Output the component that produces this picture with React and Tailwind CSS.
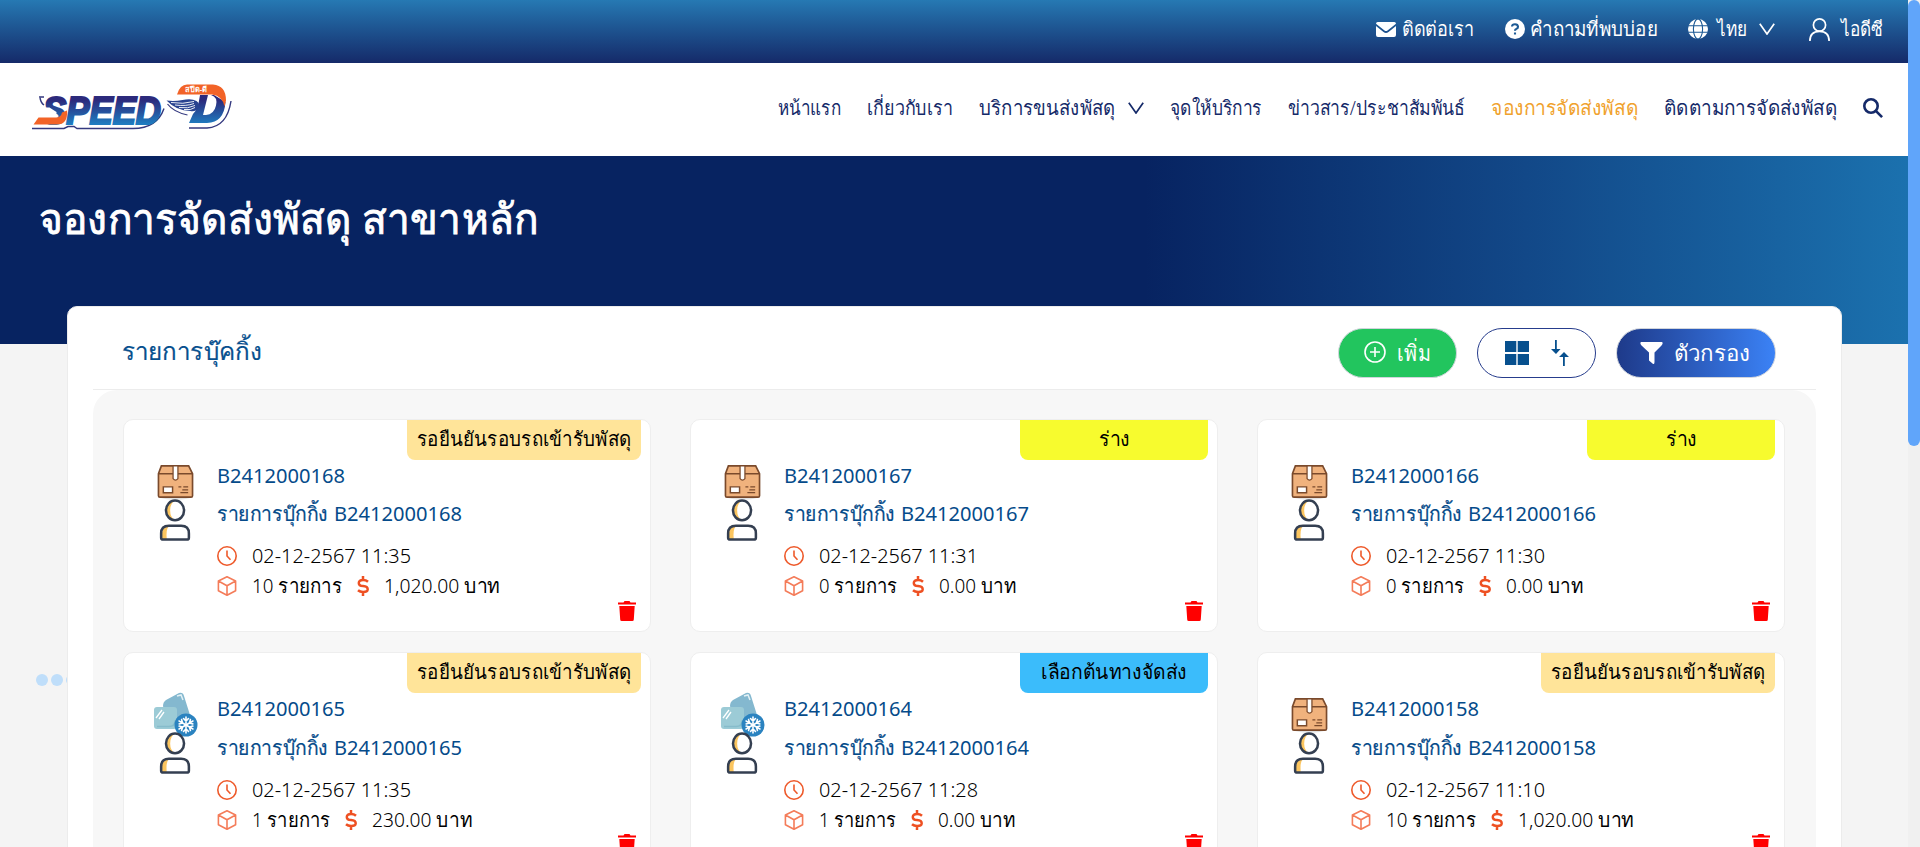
import React, { useLayoutEffect, useRef, useState } from "react";

/* Text set to a fixed measure, whichever Thai face the machine supplies. */
function Fit({ w, className = "", children }) {
  const ref = useRef(null);
  const [k, setK] = useState(1);
  useLayoutEffect(() => {
    if (ref.current && ref.current.offsetWidth) setK(w / ref.current.getBoundingClientRect().width);
  }, []);
  return (
    <span className={"block shrink-0 whitespace-nowrap " + className} style={{ width: w }}>
      <span ref={ref} className="inline-block origin-left" style={{ transform: `scaleX(${k})` }}>
        {children}
      </span>
    </span>
  );
}

const Chevron = () => (
  <svg className="h-3 w-4 shrink-0" viewBox="0 0 16 12" fill="none" stroke="currentColor" strokeWidth="1.7">
    <path d="M.8 .8 8 11 15.2 .8" />
  </svg>
);

function Logo() {
  return (
    <svg className="h-[54px] w-[206px]" viewBox="0 0 206 54">
      <defs>
        <linearGradient id="ink" x1="0" y1="14" x2="0" y2="44" gradientUnits="userSpaceOnUse">
          <stop offset="0.2" stopColor="#2c2a7c" />
          <stop offset="1" stopColor="#1f7cc0" />
        </linearGradient>
      </defs>
      <path
        d="M11 17h5M12 18q1 5 4 7M4 48.500h32l4-2h6l3 2h56q24 0 31-20M161 48h18q20-1 24-27"
        fill="none"
        stroke="#34397f"
        strokeWidth="1.400"
      />
      <text
        x="15"
        y="43.500"
        textLength="118"
        lengthAdjust="spacingAndGlyphs"
        fontFamily="Liberation Sans, sans-serif"
        fontWeight="700"
        fontStyle="italic"
        fontSize="38"
        fill="url(#ink)"
        stroke="url(#ink)"
        strokeWidth="2.200"
      >
        SPEED
      </text>
      <path d="M13 27.500h8.500l7 4.500v6H13z" fill="#fff" />
      <path d="M5.500 44.500 10.500 37.500H28q5 0 6-5l5-2q1 14-10 14z" fill="#f26327" />
      <path
        d="M172 15h8l-5 20h3q8-.500 10-9.500Q190 17 183 15h3l11.500 7Q196 42.500 179 43h-18l4-9q5-4 7-19z"
        fill="url(#ink)"
      />
      <path d="M149 14.500q3-10 10-10h26q13 1 13 16l-1.500 6q-2-10.500-12.500-12z" fill="#f26327" />
      <text x="157" y="11.500" fontFamily="Noto Sans, sans-serif" fontWeight="700" fontSize="7.500" fill="#fff" textLength="22">สปีด-ดี</text>
      <path d="M138.500 20.500q8 1 16-.500 9-2 14 1 4 3 2 7-3 4-8 3-14 0-24-10.500z" fill="#2a4390" />
      <path
        d="M143 22.500q12 2 23-1M147 25q11 1.500 19-1.500M151 27.500q9 1.500 16-2M156 29.500q7 1 11-2"
        fill="none"
        stroke="#fff"
        strokeWidth=".9"
      />
      <path d="M139.500 24q6 8 20 11" fill="none" stroke="#34397f" strokeWidth="1.200" />
    </svg>
  );
}

const Parcel = () => (
  <svg className="absolute left-[33px] top-[44px] h-[36px] w-[37px]" viewBox="0 0 38 36">
    <ellipse cx="19" cy="34" rx="15" ry="2" fill="#e3e3e3" />
    <path d="M4.5 1.5h28l4 8V32q0 1.500-1.500 1.500H3Q1.500 33.500 1.500 32V9.500z" fill="#f0b27d" stroke="#7a4a2c" strokeWidth="1.700" />
    <path d="M1.500 9.500h35" stroke="#7a4a2c" strokeWidth="1.500" />
    <path d="M16.500 1.500h5v13q-2.500 3-5 0z" fill="#fff" stroke="#7a4a2c" strokeWidth="1.300" />
    <path d="M6.500 23h9.500v6H6.500z" fill="#fff" stroke="#7a4a2c" strokeWidth="1.500" />
    <path d="M22 23h3M27 23h5M26 26h6M24 29h8" stroke="#7a4a2c" strokeWidth="1.300" />
  </svg>
);

const Frozen = () => (
  <svg className="absolute left-[29px] top-[39px] h-[46px] w-[45px]" viewBox="0 0 45 46">
    <path d="M13 8 26 1q4-1 5 3l6 19q0 3-4 4L17 29q-3 0-4-4l-3-11q0-4 3-6z" fill="#84b8cf" />
    <path d="m24 4 4-1 2 5" fill="none" stroke="#e3f1f5" strokeWidth="1.500" />
    <rect x="1" y="15" width="23" height="22" rx="3" fill="#9ccbd6" />
    <path d="m3 26 6-8M6 27l5-7" stroke="#fff" strokeWidth="1.300" />
    <path d="M4 34.500h12q6 0 6-6" fill="none" stroke="#86bccb" strokeWidth="1.500" />
    <circle cx="33" cy="33" r="11.500" fill="#2b83c0" />
    <g stroke="#fff" strokeWidth="1.600" strokeLinecap="round" fill="none">
      {[0, 60, 120, 180, 240, 300].map((a) => (
        <path key={a} transform={`rotate(${a} 33 33)`} d="M33 33v-8M30.500 26.500l2.500 2.500 2.500-2.500" />
      ))}
    </g>
  </svg>
);

const Person = () => (
  <svg className="absolute left-[35px] top-[78px] h-[44px] w-[33px]" viewBox="0 0 34 46" preserveAspectRatio="none">
    <ellipse cx="16.500" cy="13" rx="9.300" ry="10.300" fill="#fff" />
    <path d="M16.500 2.700a9.300 10.300 0 0 0 0 20.600q-5-3-5-10.300t5-10.300z" fill="#fbc55f" />
    <ellipse cx="16.500" cy="13" rx="9.300" ry="10.300" fill="none" stroke="#343f51" strokeWidth="2.600" />
    <path d="M2.200 43.200V37q0-8 8-8h12.600q8 0 8 8v4.500q0 2-2 2H4q-1.800 0-1.800-2z" fill="#fff" />
    <path d="M3 43V37q0-7 7-7.500-3 3-2 14z" fill="#fbc55f" />
    <path d="M2.200 41.500V37q0-8 8-8h12.600q8 0 8 8v4.500q0 2-2 2H4.200q-2 0-2-2z" fill="none" stroke="#343f51" strokeWidth="2.600" />
  </svg>
);

const Clock = () => (
  <svg className="h-5 w-5 shrink-0" viewBox="0 0 20 20" fill="none" stroke="#ee5a2b" strokeWidth="1.600">
    <circle cx="10" cy="10" r="9.200" />
    <path d="M10 4.500V10l3.500 3.800" />
  </svg>
);

const Cube = () => (
  <svg className="h-5 w-5 shrink-0" viewBox="0 0 20 20" fill="none" stroke="#f47c59" strokeWidth="1.600" strokeLinejoin="round">
    <path d="M10 .8 18.600 5v9.800L10 19.200 1.400 14.800V5zM1.400 5 10 9.800 18.600 5M10 9.800v9.400" />
  </svg>
);

const Dollar = () => (
  <svg className="h-5 w-3 shrink-0" viewBox="0 0 12 20" fill="none" stroke="#ee5022" strokeWidth="2.500">
    <path d="M6 0v4M6 16v4M11 5.800Q9 4 6 4 1.800 4 1.800 7T6 10q4.700.300 4.700 3.200T6 16Q3 16 1 14.200" />
  </svg>
);

const Trash = () => (
  <svg className="absolute left-[494px] top-[181px] h-5 w-[18px]" viewBox="0 0 18 20" fill="#f00">
    <path d="M0 1.500h5.500L6.500 0h5l1 1.500H18V3.500H0zM1.300 5h15.400l-.9 13.500q0 1.500-1.500 1.500H3.700q-1.500 0-1.500-1.500z" />
  </svg>
);

const wait = { label: "รอยืนยันรอบรถเข้ารับพัสดุ", w: 214, box: "w-[234px] bg-[#ffe499]" };
const draft = { label: "ร่าง", w: 31, box: "w-[188px] bg-[#f7fb2e]" };
const origin = { label: "เลือกต้นทางจัดส่ง", w: 146, box: "w-[188px] bg-[#3bbcfb]" };

const bookings = [
  { id: "B2412000168", date: "02-12-2567 11:35", n: "10", nw: 90, sum: "1,020.00", sw: 116, st: wait },
  { id: "B2412000167", date: "02-12-2567 11:31", n: "0", nw: 78, sum: "0.00", sw: 77, st: draft },
  { id: "B2412000166", date: "02-12-2567 11:30", n: "0", nw: 78, sum: "0.00", sw: 77, st: draft },
  { id: "B2412000165", date: "02-12-2567 11:35", n: "1", nw: 78, sum: "230.00", sw: 100, st: wait, cold: true },
  { id: "B2412000164", date: "02-12-2567 11:28", n: "1", nw: 77, sum: "0.00", sw: 77, st: origin, cold: true },
  { id: "B2412000158", date: "02-12-2567 11:10", n: "10", nw: 90, sum: "1,020.00", sw: 116, st: wait },
];

function Card({ b, lower }) {
  return (
    <article className="relative h-[213px] rounded-[10px] border border-[#eeeeee] bg-white">
      <div className={"absolute right-[9px] top-0 flex h-10 justify-center rounded-b-lg text-xl leading-[38px] text-black " + b.st.box}>
        <Fit w={b.st.w}>{b.st.label}</Fit>
      </div>
      {b.cold ? <Frozen /> : <Parcel />}
      <Person />
      <div className="flex flex-col pl-[93px] pt-[42px] text-xl leading-7 text-[#054b8a]">
        <Fit w={128}>{b.id}</Fit>
        <div className={"flex gap-[6px] " + (lower ? "mt-[11px]" : "mt-[10px]")}>
          <Fit w={111} className="[-webkit-text-stroke:0.2px]">รายการบุ๊กกิ้ง</Fit>
          <Fit w={128}>{b.id}</Fit>
        </div>
      </div>
      <div className="flex flex-col gap-[2px] pl-[93px] pt-[14px] text-xl font-light leading-7 text-black">
        <div className="flex items-center gap-[15px]">
          <Clock />
          <Fit w={159}>{b.date}</Fit>
        </div>
        <div className="flex items-center gap-[15px]">
          <Cube />
          <Fit w={b.nw}>{b.n} รายการ</Fit>
          <Dollar />
          <Fit w={b.sw}>{b.sum} บาท</Fit>
        </div>
      </div>
      <Trash />
    </article>
  );
}

export default function App() {
  return (
    <div className="flex h-[847px] overflow-hidden bg-[#f4f4f4] font-['Noto_Sans',sans-serif]">
      <div className="w-[1908px] shrink-0">
        <div className="flex h-[63px] items-center justify-end bg-linear-to-b from-[#2679b3] to-[#152a69] pb-[5px] pr-[25px] text-xl text-white">
          <svg className="mr-[6px] h-[15px] w-5" viewBox="0 0 20 15" fill="currentColor">
            <path d="M1.800 0h16.400Q20 0 20 1.800L11.500 8.500q-1.500 1-3 0L0 1.800Q0 0 1.800 0zM0 4l7.500 6q2.500 1.800 5 0L20 4v9q0 2-2 2H2q-2 0-2-2z" />
          </svg>
          <Fit w={72}>ติดต่อเรา</Fit>
          <svg className="ml-[31px] mr-[5px] h-5 w-5" viewBox="0 0 20 20">
            <circle cx="10" cy="10" r="10" fill="#fff" />
            <path d="M7 7.500Q7.200 5.200 10 5.200t3 2.500q0 1.500-1.600 2.200-1.400.600-1.400 1.800M10 13.600v2" fill="none" stroke="#1d5a95" strokeWidth="2.100" />
          </svg>
          <Fit w={128}>คำถามที่พบบ่อย</Fit>
          <svg className="ml-[30px] mr-[9px] h-5 w-5" viewBox="0 0 20 20">
            <circle cx="10" cy="10" r="10" fill="#fff" />
            <g fill="none" stroke="#1d5a95" strokeWidth="1.100">
              <ellipse cx="10" cy="10" rx="4.600" ry="10" />
              <path d="M0 6.700h20M0 13.300h20" />
            </g>
          </svg>
          <Fit w={30}>ไทย</Fit>
          <span className="ml-3 mr-[34px]"><Chevron /></span>
          <svg className="mr-[11px] h-[23px] w-[21px]" viewBox="0 0 21 23" fill="none" stroke="currentColor" strokeWidth="1.700">
            <circle cx="10.500" cy="7" r="6.100" />
            <path d="M.9 23q0-9.700 9.600-9.700T20.100 23" />
          </svg>
          <Fit w={42}>ไอดีซี</Fit>
        </div>

        <header className="flex h-[93px] items-center bg-white pl-7 pr-[25px] text-xl font-light text-[#152a69]">
          <div className="mr-auto pb-[5px]"><Logo /></div>
          <nav className="flex items-center gap-[26px] pb-[3px]">
            <Fit w={63}>หน้าแรก</Fit>
            <Fit w={86}>เกี่ยวกับเรา</Fit>
            <div className="flex items-center gap-[13px]">
              <Fit w={136}>บริการขนส่งพัสดุ</Fit>
              <Chevron />
            </div>
            <Fit w={92}>จุดให้บริการ</Fit>
            <Fit w={177}>ข่าวสาร/ประชาสัมพันธ์</Fit>
            <Fit w={147} className="text-[#f0a22e]">จองการจัดส่งพัสดุ</Fit>
            <Fit w={173}>ติดตามการจัดส่งพัสดุ</Fit>
            <svg className="h-5 w-5" viewBox="0 0 20 20" fill="none" stroke="currentColor" strokeWidth="2.600">
              <circle cx="8" cy="8" r="6.700" />
              <path d="m12.800 12.800 6.300 6.300" />
            </svg>
          </nav>
        </header>

        <section className="h-[188px] bg-[linear-gradient(90deg,#072361_60%,#124888_80%,#1b71ae_100%)] pl-[39px] pt-[32px]">
          <h1 className="text-[42px] font-medium leading-[60px] text-white [-webkit-text-stroke:0.9px]"><Fit w={499}>จองการจัดส่งพัสดุ สาขาหลัก</Fit></h1>
        </section>

        <main className="relative -mt-[38px] ml-[67px] h-[700px] w-[1775px] rounded-[10px] border border-[#ececec] bg-white px-[25px]">
          <div className="absolute -left-[32px] top-[367px] flex w-[31px] gap-[3px] overflow-hidden">
            <i className="size-3 shrink-0 rounded-full bg-[#bfdefa]" />
            <i className="size-3 shrink-0 rounded-full bg-[#bfdefa]" />
            <i className="size-3 shrink-0 rounded-full bg-[#bfdefa]" />
          </div>
          <div className="flex h-[83px] items-center border-b border-[#ececec] pl-[29px] pr-10">
            <h2 className="mr-auto pt-[5px] text-2xl text-[#07508e] [-webkit-text-stroke:0.2px]"><Fit w={140}>รายการบุ๊คกิ้ง</Fit></h2>
            <div className="flex gap-5 pt-[10px]">
              <button className="flex h-[50px] w-[119px] items-center gap-[11px] rounded-full border border-gray-300 bg-[#22c55e] pb-[2px] pl-[25px] text-[22px] text-white">
                <svg className="h-[22px] w-[22px]" viewBox="0 0 22 22" fill="none" stroke="currentColor" strokeWidth="1.600">
                  <circle cx="11" cy="11" r="10" />
                  <path d="M11 6v10M6 11h10" />
                </svg>
                <Fit w={34}>เพิ่ม</Fit>
              </button>
              <button className="flex h-[50px] w-[119px] items-center gap-[22px] rounded-full border border-[#263c8c] bg-white pl-[27px]">
                <svg className="h-6 w-6" viewBox="0 0 24 24" fill="#07508e">
                  <path d="M0 0h11.300v11H0zM12.700 0H24v11H12.700zM0 13h11.300v11H0zM12.700 13H24v11H12.700z" />
                </svg>
                <svg className="h-[26px] w-[18px]" viewBox="0 0 18 26" fill="#07508e">
                  <path d="M4 0h1.800v9H9.500L5 14 0 9h4zM12 26h1.800v-9H18l-5-5-5 5h4z" />
                </svg>
              </button>
              <button className="flex h-[50px] w-[160px] items-center gap-[10px] rounded-full border border-gray-300 bg-linear-to-r from-[#1e3a8a] to-[#3b82f6] pb-[2px] pl-[23px] text-[22px] text-white">
                <svg className="mt-[2px] h-[22px] w-[23px]" viewBox="0 0 23 22" fill="currentColor">
                  <path d="M1 0h21q1.500 1-.500 3.500L14.500 10.500V20q0 3-2 1.500L9 18.500v-8L1.500 3.500Q-.500 1 1 0z" />
                </svg>
                <Fit w={76}>ตัวกรอง</Fit>
              </button>
            </div>
          </div>
          <div className="grid grid-cols-[528px_528px_528px] gap-x-[39px] gap-y-5 rounded-t-3xl bg-[#f7f7f7] pb-10 pl-[30px] pt-[29px]">
            {bookings.map((b, i) => <Card key={b.id} b={b} lower={i > 2} />)}
          </div>
        </main>
      </div>
      <div className="h-full w-3 shrink-0 bg-[#f0f0f0]">
        <div className="h-[446px] rounded-full bg-[#60a5fa]" />
      </div>
    </div>
  );
}
